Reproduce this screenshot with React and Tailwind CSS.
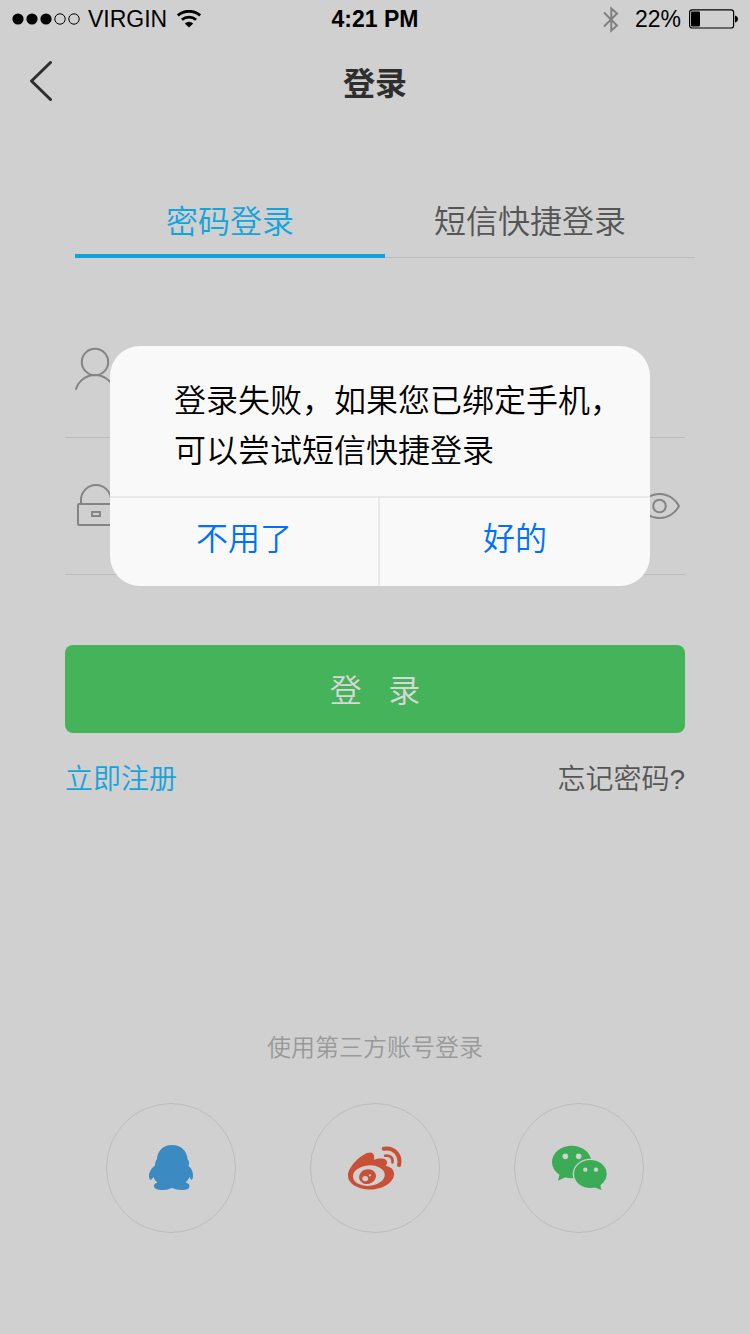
import React, { useState } from "react";

const StatusBar = () => (
    <div className="grid grid-cols-3 items-center h-[38px] px-3 text-[23px] leading-none text-black">
        <div className="flex items-center gap-2">
            <svg className="w-[68px] h-3 shrink-0" viewBox="0 0 68 12">
                <circle cx="6" cy="6" r="5.6" />
                <circle cx="20" cy="6" r="5.6" />
                <circle cx="34" cy="6" r="5.6" />
                <g fill="none" stroke="black">
                    <circle cx="48" cy="6" r="5.2" />
                    <circle cx="62" cy="6" r="5.2" />
                </g>
            </svg>
            <span>VIRGIN</span>
            <svg className="w-6 h-[18px] ml-0.5 shrink-0" viewBox="0 0 24 18">
                <g fill="none" stroke="black" strokeWidth="2.8">
                    <path d="M0.9 5.4C7-0.1 17-0.1 23.1 5.4" />
                    <path d="M4.9 9.8C9 6.1 15 6.1 19.1 9.8" />
                </g>
                <path d="M12 17.5L7.8 13.500Q12 10 16.2 13.500Z" />
            </svg>
        </div>
        <div className="text-center font-bold">4:21 PM</div>
        <div className="flex items-center justify-end gap-2">
            <svg
                className="w-4 h-[27px] mr-2 shrink-0"
                viewBox="0 0 16 27"
                fill="none"
                stroke="#808080"
                strokeWidth="2"
            >
                <path d="M1 6.5L14 19.5L8.3 24.5V2.5L14 7.5L1 20.5" />
            </svg>
            <span>22%</span>
            <svg className="w-[49px] h-5 shrink-0" viewBox="0 0 49 20">
                <rect
                    x="0.6"
                    y="0.8"
                    width="44"
                    height="18.2"
                    rx="2.5"
                    fill="none"
                    stroke="black"
                    strokeWidth="1.2"
                />
                <rect x="2" y="2.4" width="9" height="15" rx="0.8" />
                <path d="M46 6.5Q49 7.5 49 10T46 13.5Z" />
            </svg>
        </div>
    </div>
);

const UserIcon = () => (
    <svg
        className="w-10 h-11 shrink-0"
        viewBox="0 0 40 44"
        fill="none"
        stroke="#848484"
        strokeWidth="2"
        strokeLinecap="round"
    >
        <circle cx="20" cy="15" r="13.2" />
        <path d="M1 42C3.5 34 11 28 20 28S36.5 34 39 42" />
    </svg>
);

const LockIcon = () => (
    <svg
        className="w-10 h-11 shrink-0"
        viewBox="0 0 40 44"
        fill="none"
        stroke="#848484"
        strokeWidth="2"
    >
        <path d="M6 20V16A15 15 0 0 1 36 16V20" />
        <rect x="3" y="20" width="36" height="21" rx="1" />
        <rect x="17" y="28" width="8" height="4" />
    </svg>
);

const EyeIcon = () => (
    <svg
        className="w-[42px] h-7"
        viewBox="0 0 42 28"
        fill="none"
        stroke="#848484"
        strokeWidth="2"
        strokeLinejoin="round"
    >
        <path d="M1 14C4 8 11 2 20.5 2S37 8 40 14C37 20 30 26 20.5 26S4 20 1 14Z" />
        <circle cx="20.5" cy="14" r="6.3" />
    </svg>
);

const QqIcon = () => (
    <svg className="w-11 h-[46px]" viewBox="0 0 44 46" fill="#3b8ac1">
        <path d="M23 0C14 0 8.5 6 8 14C6.5 16 6 18 6 20.5C2.5 23 0 27 0 31C0 34 1 35.5 2.5 34.5L4.5 32C5 34 6.5 36 8.5 37.5C6.5 38 5 39 5 41C5 44 9 45 13 45C18 45 20 44 23 43C26 44 29 45 33 45C37 45 40.5 44 40.5 41C40.5 39 39 38 36.5 37.5C38.5 36 39.5 34 40.5 32L42 34.5C43.5 35.5 44 33 44 30.5C44 27 43 23.5 39.5 21C40.5 19 40 17 39.5 15.5L38.5 14C38 6 32 0 23 0Z" />
    </svg>
);

const WeiboIcon = () => (
    <svg className="w-[54px] h-11" viewBox="0 0 163 132" fill="#c95037">
        <path d="M0 88C0 60 46 18 68 19C78 20 81 30 78 41C93 36 117 34 118 49C118 54 116 57 114 60C129 62 139 71 139 84C139 110 103 131 68 131C31 131 0 115 0 88Z" />
        <ellipse cx="63" cy="89" rx="48" ry="31" fill="#d0d0d0" transform="rotate(-5 63 89)" />
        <ellipse cx="59" cy="92" rx="26" ry="22" transform="rotate(-15 59 92)" />
        <ellipse cx="52" cy="98" rx="9" ry="8" fill="#d0d0d0" />
        <circle cx="66" cy="88" r="3.5" fill="#d0d0d0" />
        <g fill="none" stroke="#c95037" strokeLinecap="round">
            <path d="M108 8C138 2 161 27 154 57" strokeWidth="12" />
            <path d="M112 29C127 26 137 36 134 49" strokeWidth="8" />
        </g>
    </svg>
);

const WechatIcon = () => (
    <svg className="w-14 h-[46px]" viewBox="0 0 168 138" fill="#3cab56">
        <path d="M26 88L21 107L46 95Z" />
        <ellipse cx="62" cy="51" rx="59" ry="49" />
        <ellipse cx="118" cy="87" rx="53" ry="46" fill="#d0d0d0" />
        <ellipse cx="118" cy="87" rx="49" ry="42" />
        <path d="M130 127L151 135L147 114Z" />
        <g fill="#d0d0d0">
            <circle cx="43" cy="34" r="8.5" />
            <circle cx="83" cy="34" r="8.5" />
            <circle cx="103" cy="74" r="6.5" />
            <circle cx="135" cy="74" r="6.5" />
        </g>
    </svg>
);

const tabs = ["密码登录", "短信快捷登录"];

const socials = [
    { label: "QQ", icon: <QqIcon /> },
    { label: "微博", icon: <WeiboIcon /> },
    { label: "微信", icon: <WechatIcon /> },
];

export default function App() {
    const [tab, setTab] = useState(0);
    const [open, setOpen] = useState(true);

    return (
        <div className="relative min-h-screen bg-[#d0d0d0] font-['Liberation_Sans','Noto_Sans_CJK_SC',sans-serif]">
            <StatusBar />

            <header className="grid grid-cols-[80px_1fr_80px] items-center h-[88px]">
                <button aria-label="返回" className="pl-7">
                    <svg
                        className="w-6 h-11"
                        viewBox="0 0 24 44"
                        fill="none"
                        stroke="#2e2e2e"
                        strokeWidth="3"
                        strokeLinecap="round"
                        strokeLinejoin="round"
                    >
                        <path d="M22.5 2.500L3.5 21L22.5 39.500" />
                    </svg>
                </button>
                <h1 className="pt-1 text-center text-[32px] leading-10 font-bold text-[#2e2e2e]">
                    登录
                </h1>
            </header>

            <main className="px-[65px]">
                <div
                    role="tablist"
                    className="grid grid-cols-2 mt-[58px] ml-[10px] -mr-[10px]"
                >
                    {tabs.map((name, i) => (
                        <button
                            key={name}
                            role="tab"
                            aria-selected={tab === i}
                            onClick={() => setTab(i)}
                            className={`h-[74px] pt-1.5 text-[32px] font-[350] last:pr-5 ${
                                tab === i
                                    ? "border-b-4 border-[#14a4dc] text-[#14a4dc]"
                                    : "pb-[3px] border-b border-[#bcbcbc] text-[#555555]"
                            }`}
                        >
                            {name}
                        </button>
                    ))}
                </div>

                <form className="mt-[43px]" onSubmit={(e) => e.preventDefault()}>
                    <div className="flex items-center gap-6 h-[137px] px-[10px] border-b border-[#bcbcbc]">
                        <UserIcon />
                        <input
                            aria-label="账号"
                            type="text"
                            className="flex-1 min-w-0 h-16 text-[28px] outline-none"
                        />
                    </div>
                    <div className="flex items-center gap-6 h-[137px] pl-[10px] pr-1 border-b border-[#bcbcbc]">
                        <LockIcon />
                        <input
                            aria-label="密码"
                            type="password"
                            className="flex-1 min-w-0 h-16 text-[28px] outline-none"
                        />
                        <button type="button" aria-label="显示密码">
                            <EyeIcon />
                        </button>
                    </div>
                    <button
                        type="submit"
                        className="w-full h-[88px] mt-[70px] pt-1 rounded-lg bg-[#45b35a] text-[32px] font-[350] text-[#d8d8d8]"
                    >
                        登&nbsp;&nbsp;&nbsp;录
                    </button>
                </form>

                <div className="flex justify-between mt-[26px] text-[28px] leading-[42px] font-[350]">
                    <a href="#register" className="text-[#14a4dc]">
                        立即注册
                    </a>
                    <a href="#forgot" className="text-[#555555]">
                        忘记密码?
                    </a>
                </div>
            </main>

            <section className="mt-[229px] pb-[100px]">
                <h2 className="text-center text-2xl leading-9 font-[350] text-[#999999]">
                    使用第三方账号登录
                </h2>
                <div className="flex justify-center gap-[74px] mt-[37px]">
                    {socials.map((s) => (
                        <a
                            key={s.label}
                            href="#login"
                            aria-label={s.label}
                            className="flex items-center justify-center size-[130px] rounded-full border border-[#bcbcbc]"
                        >
                            {s.icon}
                        </a>
                    ))}
                </div>
            </section>

            {open && (
                <div className="absolute inset-0 flex items-start justify-center pl-[110px] pr-[100px] pt-[346px]">
                    <div
                        role="alertdialog"
                        aria-label="登录失败"
                        className="w-full max-w-[540px] rounded-[30px] bg-[#f9f9f9] overflow-hidden"
                    >
                        <p className="pt-[30px] pb-5 pl-16 text-[32px] leading-[50px] font-[350] text-black">
                            登录失败，如果您已绑定手机，
                            <br />
                            可以尝试短信快捷登录
                        </p>
                        <div className="grid grid-cols-2 h-[90px] border-t-2 border-[#e8e8e8] text-[32px] font-[350] text-[#0070ff]">
                            <button
                                className="pb-1.5 border-r-2 border-[#e8e8e8]"
                                onClick={() => setOpen(false)}
                            >
                                不用了
                            </button>
                            <button
                                className="pb-1.5"
                                onClick={() => {
                                    setTab(1);
                                    setOpen(false);
                                }}
                            >
                                好的
                            </button>
                        </div>
                    </div>
                </div>
            )}
        </div>
    );
}
